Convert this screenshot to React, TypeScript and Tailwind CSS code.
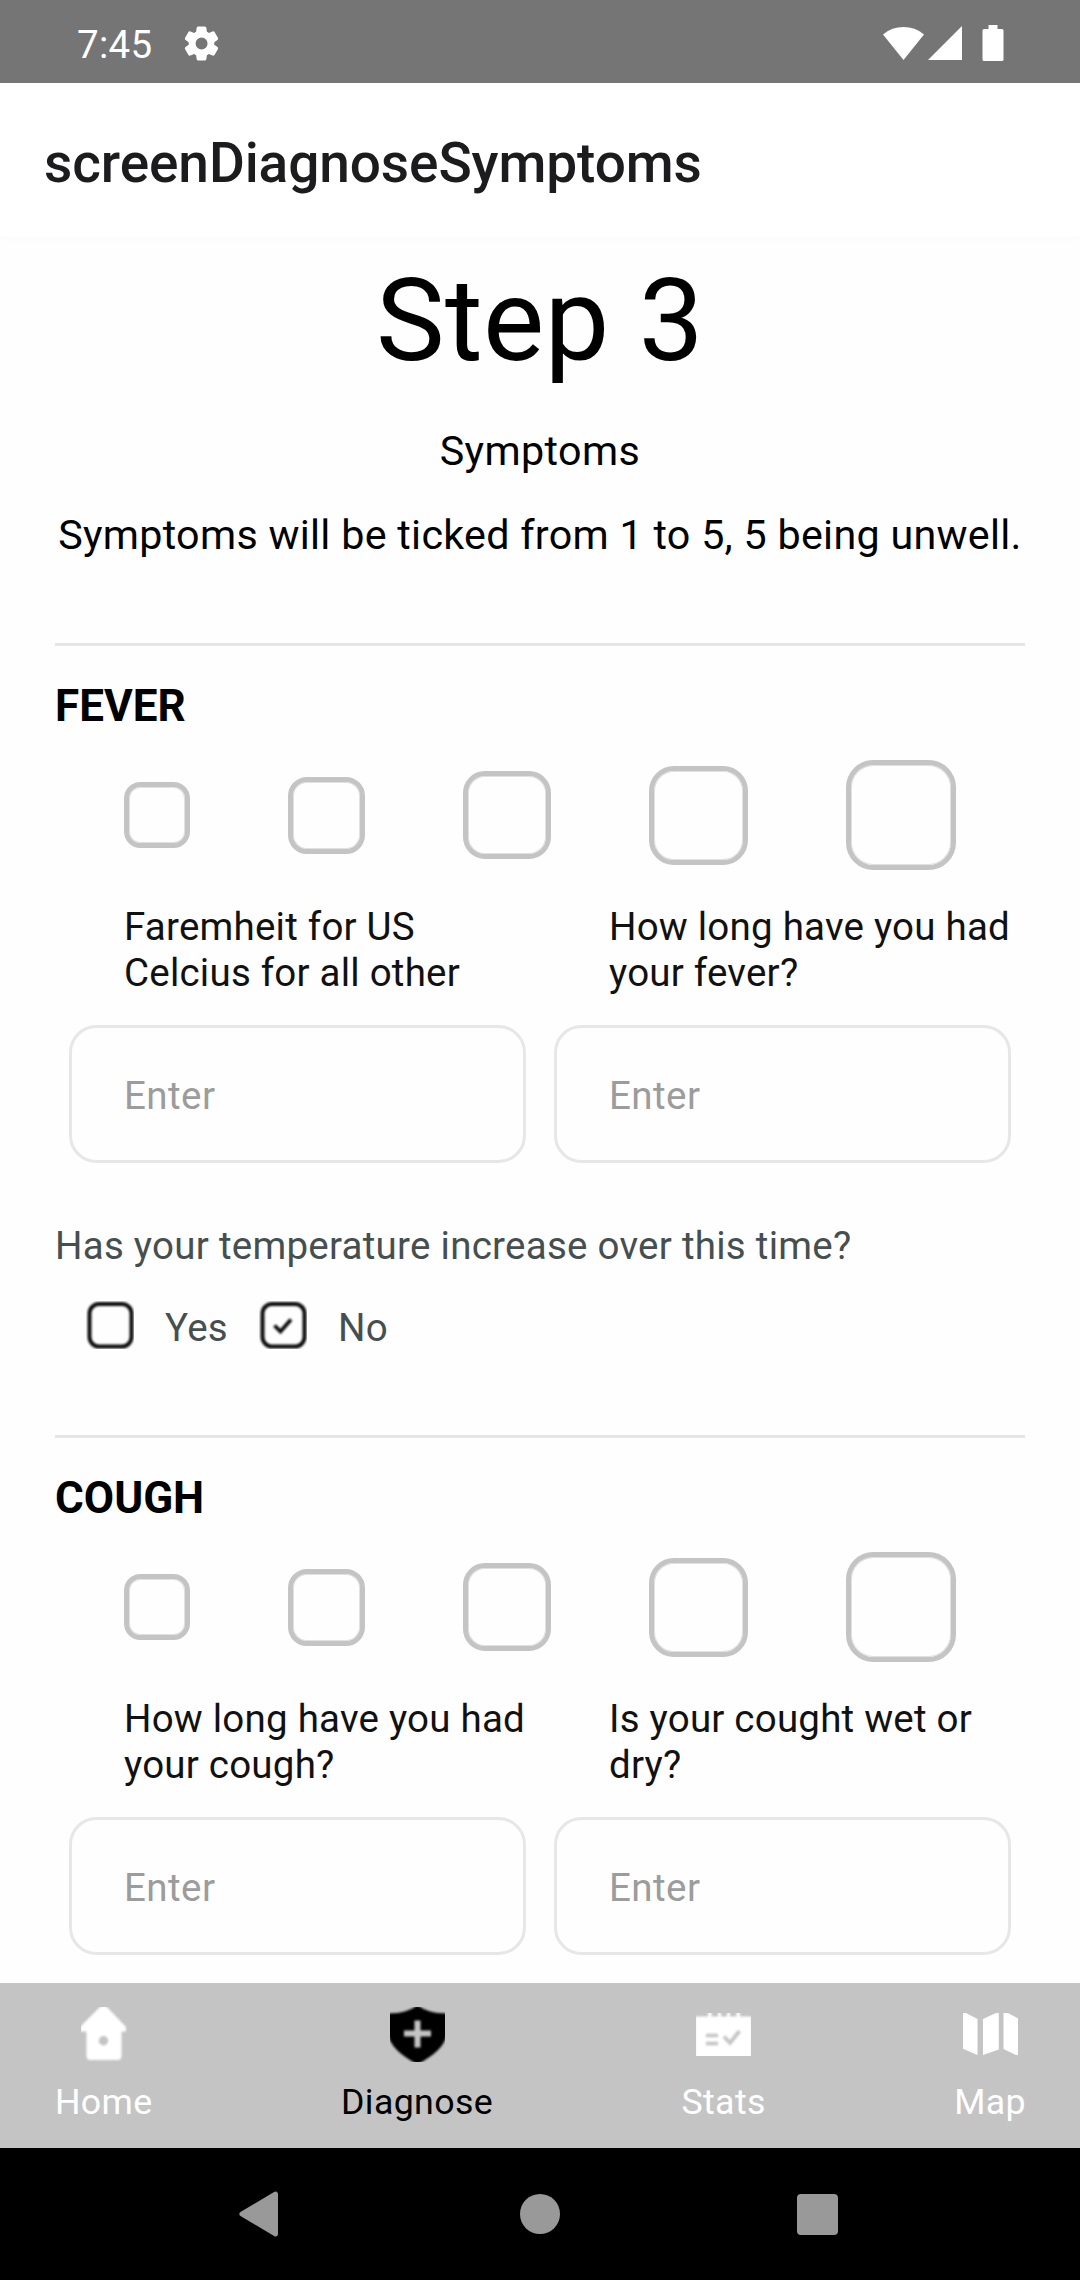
import React from "react";

const RATING_BOXES = [
  "w-[66px] h-[66px] rounded-[16.5px]",
  "w-[77px] h-[77px] rounded-[19px]",
  "w-[88px] h-[88px] rounded-[22px]",
  "w-[99px] h-[99px] rounded-[25px]",
  "w-[110px] h-[110px] rounded-[27.5px]",
];

function StatusBar() {
  return (
    <div className="flex h-[83px] items-center bg-[#757575] text-white">
      <span className="ml-[77px] mt-[6px] w-[108px] text-[38.5px] leading-[46px] tracking-[0.3px]">7:45</span>
      <svg className="-ml-[4px] mt-[4px] h-[41px] w-[41px]" viewBox="0 0 24 24" fill="currentColor">
        <path d="M19.500 12c0-.23-.01-.45-.03-.68l1.860-1.410c.4-.3.510-.86.260-1.300l-1.870-3.230a.99.99 0 0 0-1.250-.42l-2.150.91c-.37-.26-.76-.49-1.170-.68l-.29-2.310A.99.99 0 0 0 13.870 2h-3.730c-.51 0-.94.38-1 .88l-.29 2.310c-.41.19-.8.42-1.170.68l-2.150-.91a.99.99 0 0 0-1.250.42L2.410 8.620c-.25.44-.14.99.26 1.300l1.860 1.410a7.300 7.300 0 0 0 0 1.350l-1.860 1.410c-.4.3-.51.86-.26 1.300l1.870 3.230c.25.44.79.62 1.250.42l2.150-.91c.37.26.76.49 1.170.68l.29 2.310c.06.5.49.88.99.88h3.730c.5 0 .93-.38.990-.88l.29-2.310c.41-.19.8-.42 1.170-.68l2.150.91c.47.2 1 .02 1.250-.42l1.870-3.230c.25-.44.14-.99-.26-1.300l-1.860-1.410c.03-.23.04-.45.04-.68zM12.040 15.500a3.500 3.500 0 1 1 0-7 3.500 3.500 0 0 1 0 7z" />
      </svg>
      <div className="ml-auto mr-[76px] mt-[3px] flex items-center">
        <svg className="h-[36px] w-[41px]" viewBox="0 0 41 36" fill="currentColor">
          <path d="M0 9.500A31.500 31.500 0 0 1 41 9.500L20.500 35z" />
        </svg>
        <svg className="ml-[4px] h-[36px] w-[34px]" viewBox="0 0 34 36" fill="currentColor">
          <path d="M34 1v34H0z" />
        </svg>
        <svg className="ml-[20px] h-[36px] w-[22px]" viewBox="0 0 22 36" fill="currentColor">
          <path d="M6.500 0h9v4H20a1.500 1.500 0 0 1 1.500 1.500v29A1.500 1.500 0 0 1 20 36H2a1.500 1.500 0 0 1-1.500-1.500v-29A1.500 1.500 0 0 1 2 4h4.500z" />
        </svg>
      </div>
    </div>
  );
}

function Field({ label }: { label: string[] }) {
  return (
    <div className="w-[457px] tracking-[0.22px]">
      <div className="ml-[55px] whitespace-nowrap text-[38.5px] leading-[46px] text-[#111111]">
        {label.map((line) => (
          <div key={line}>{line}</div>
        ))}
      </div>
      <div className="mt-[29px] flex h-[138px] items-center rounded-[27.5px] border-[3px] border-[#e7e7e7] pl-[52px] pt-[3px] text-[38.5px] tracking-[0.45px] text-[#9c9c9c]">
        Enter
      </div>
    </div>
  );
}

function SymptomSection({ title, left, right }: { title: string; left: string[]; right: string[] }) {
  return (
    <section className="border-t-[3px] border-[#e5e5e5] pt-[34px]">
      <h2 className="text-[44px] font-bold leading-[52px] text-black">{title}</h2>
      <div className="mt-[28px] flex h-[110px] items-center justify-around px-[20px]">
        {RATING_BOXES.map((size) => (
          <div key={size} className={`${size} border-[5px] border-[#c4c4c4] shadow-[inset_0_0_0_1px_#e1e1e1]`} />
        ))}
      </div>
      <div className="mt-[34px] flex justify-between px-[14px]">
        <Field label={left} />
        <Field label={right} />
      </div>
    </section>
  );
}

function CheckSquare({ checked }: { checked?: boolean }) {
  return (
    <svg className="h-[48px] w-[48px]" viewBox="0 0 48 48" fill="none" stroke="#0c0c0c">
      <g className="blur-[0.9px]">
        <rect x="3.500" y="3" width="42" height="42.500" rx="9.500" strokeWidth="4" />
        {checked && <path d="M15.500 24.500l6 6 10.500-12" strokeWidth="3.800" />}
      </g>
    </svg>
  );
}

function HomeIcon() {
  return (
    <svg className="h-[55px] w-[46px]" viewBox="0 0 46 55" fill="currentColor">
      <path
        className="blur-[0.8px]"
        fillRule="evenodd"
        d="M20 -1h5L45 20v4.500h-4.500V49a4 4 0 0 1-4 4H9.500a4 4 0 0 1-4-4V24.500H-1V20zM22.500 29a4.700 4.700 0 1 0 0 9.400 4.700 4.700 0 0 0 0-9.400z"
      />
    </svg>
  );
}

function ShieldIcon() {
  return (
    <svg className="h-[55px] w-[55px]" viewBox="0 0 55 55" fill="currentColor">
      <path
        className="blur-[0.8px]"
        fillRule="evenodd"
        d="M27.500 -2C20 3.500 13 6.500 -3 6.500V24C0 40 11 48 27.500 57.500C44 48 55 40 58 24V6.500C42 6.500 35 3.500 27.500 -2zM24.500 13.500V23.500H14v6H24.500V40.500H30.500V29.500H41v-6H30.500V13.500z"
      />
    </svg>
  );
}

function StatsIcon() {
  return (
    <svg className="my-[6px] h-[43px] w-[55px]" viewBox="0 6 55 43" fill="none">
      <g className="blur-[0.8px]">
        <path d="M-1 9.500H12V4h3.500v5.500H22V4h3v5.500h6V4h3v5.500h6.500V4H44v5.500h12V51H-1z" fill="#ffffff" />
        <path d="M10 28.500h12M10 36.500h12M28 29.500l6 6.500 9.500-12" stroke="#c4c4c4" strokeWidth="3.700" />
      </g>
    </svg>
  );
}

function MapIcon() {
  return (
    <svg className="my-[6px] h-[43px] w-[55px]" viewBox="0 6 55 43" fill="currentColor">
      <path className="blur-[0.7px]" d="M-2 4.500L3 6l11.500 6v36L-2 41zM20 12l13-6 2.800-2v38.500L20 48zM40.500 4l4.500 2 12 6.500V48h-4l-12.500-6z" />
    </svg>
  );
}

const TABS = [
  { name: "Home", icon: <HomeIcon />, tone: "text-white" },
  { name: "Diagnose", icon: <ShieldIcon />, tone: "text-black" },
  { name: "Stats", icon: <StatsIcon />, tone: "text-white" },
  { name: "Map", icon: <MapIcon />, tone: "text-white" },
];

function TabBar() {
  return (
    <nav className="flex h-[165px] justify-between bg-[#c4c4c4] pl-[55px] pr-[54px] pt-[24px]">
      {TABS.map((tab) => (
        <div key={tab.name} className={`flex flex-col items-center ${tab.tone}`}>
          {tab.icon}
          <span className="mt-[18px] text-[35.75px] leading-[44px] tracking-[0.35px]">{tab.name}</span>
        </div>
      ))}
    </nav>
  );
}

function SystemNav() {
  return (
    <div className="flex h-[132px] items-center bg-black pl-[239px] text-[#999999]">
      <svg className="h-[46px] w-[39px]" viewBox="0 0 40 46" fill="currentColor">
        <path d="M1.500 21L36 .500a2.500 2.500 0 0 1 4 2v41a2.500 2.500 0 0 1-4 2L1.500 25a2.300 2.300 0 0 1 0-4z" />
      </svg>
      <div className="ml-[242px] h-[40px] w-[40px] rounded-full bg-[#999999]" />
      <div className="ml-[237px] h-[41px] w-[41px] rounded-[4px] bg-[#999999]" />
    </div>
  );
}

export default function App() {
  return (
    <div className="flex h-[2280px] w-[1080px] flex-col overflow-hidden bg-[#fefefe] font-['Roboto',sans-serif]">
      <StatusBar />
      <header className="z-10 flex h-[154px] items-center bg-white pl-[44px] shadow-[0_2px_6px_rgba(0,0,0,0.02)]">
        <h1 className="mt-[6px] text-[55px] font-medium leading-[64px] tracking-[-0.1px] text-[#1c1c1e]">
          screenDiagnoseSymptoms
        </h1>
      </header>
      <main className="h-[1746px] px-[55px] text-black">
        <div className="pt-[16px] text-center">
          <h2 className="text-[115.5px] leading-[136px] tracking-[0.3px]">Step 3</h2>
          <p className="mt-[38px] text-[41.25px] leading-[48px] tracking-[0.4px]">Symptoms</p>
          <p className="mt-[36px] whitespace-nowrap text-[41.25px] leading-[48px] tracking-[0.28px]">
            Symptoms will be ticked from 1 to 5, 5 being unwell.
          </p>
        </div>
        <div className="mt-[84px]">
          <SymptomSection
            title="FEVER"
            left={["Faremheit for US", "Celcius for all other"]}
            right={["How long have you had", "your fever?"]}
          />
        </div>
        <p className="mt-[60px] text-[38.5px] leading-[46px] tracking-[0.26px] text-[#464f4f]">
          Has your temperature increase over this time?
        </p>
        <div className="mb-[84px] mt-[32px] flex h-[50px] items-start pl-[31px] text-[38.5px] leading-[46px] tracking-[0.23px] text-[#464f4f]">
          <CheckSquare />
          <span className="ml-[31px] mt-[4px] w-[94px]">Yes</span>
          <CheckSquare checked />
          <span className="ml-[31px] mt-[4px]">No</span>
        </div>
        <SymptomSection
          title="COUGH"
          left={["How long have you had", "your cough?"]}
          right={["Is your cought wet or", "dry?"]}
        />
      </main>
      <TabBar />
      <SystemNav />
    </div>
  );
}
